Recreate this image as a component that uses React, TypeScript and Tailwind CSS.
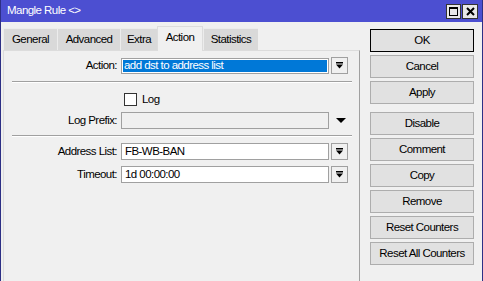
import React from 'react';

function DropArrow() {
  return (
    <svg width="7" height="7" viewBox="0 0 7 7" className="block">
      <rect x="0" y="0" width="7" height="1.5" fill="#000" />
      <path d="M0 2.5H7L3.5 6.5Z" fill="#000" />
    </svg>
  );
}

function DropButton() {
  return (
    <div className="w-[17px] h-[17px] border border-[#a0a0a0] bg-[#f0f0f0] flex items-center justify-center">
      <DropArrow />
    </div>
  );
}

function Row({ label, children }: { label: string; children: React.ReactNode }) {
  return (
    <div className="flex items-center h-[17px]">
      <div className="w-[117px] text-right pr-[4px] leading-none">{label}</div>
      {children}
    </div>
  );
}

function Separator() {
  return <div className="ml-[8px] w-[340px] h-px bg-[#a0a0a0] border-b border-white box-content" />;
}

function Btn({ label, primary }: { label: string; primary?: boolean }) {
  return (
    <div
      className={
        'w-[104px] h-[23px] flex items-center justify-center bg-[#e1e1e1] border ' +
        (primary ? 'border-black' : 'border-[#adadad]')
      }
    >
      {label}
    </div>
  );
}

const tabs = [
  { name: 'General', w: 'w-[54px]' },
  { name: 'Advanced', w: 'w-[63px]' },
  { name: 'Extra', w: 'w-[37px]' },
  { name: 'Action', w: 'w-[46px]', active: true },
  { name: 'Statistics', w: 'w-[55px]' },
];

export default function App() {
  return (
    <div className="w-[483px] h-[281px] overflow-hidden bg-[#f0f0f0] border-x border-[#2d2f85] font-['Liberation_Sans',Arial,sans-serif] text-[11.5px] tracking-[-0.55px] text-black">
      {/* title bar */}
      <div className="h-[22px] bg-[#4c4fd1] flex items-center justify-between pl-[6px] pr-[4px]">
        <span className="text-white">Mangle Rule &lt;&gt;</span>
        <div className="flex gap-[1px]">
          <div className="w-[15px] h-[15px] bg-[#e8e8e8] border border-[#333] flex items-center justify-center">
            <div className="w-[9px] h-[9px] border border-black border-t-2" />
          </div>
          <div className="w-[16px] h-[15px] bg-[#e8e8e8] border border-[#333] flex items-center justify-center">
            <svg width="9" height="9" viewBox="0 0 9 9">
              <path d="M1 1L8 8M8 1L1 8" stroke="#000" strokeWidth="2" />
            </svg>
          </div>
        </div>
      </div>

      <div className="flex">
        {/* left: tabs + panel */}
        <div className="pl-[2px] flex flex-col">
          <div className="flex items-end h-[28px]">
            {tabs.map((t) =>
              t.active ? (
                <div
                  key={t.name}
                  className={t.w + ' h-[25px] bg-[#f0f0f0] border-x border-t border-[#dcdcdc] flex items-center justify-center pb-[3px] -mb-px z-10'}
                >
                  {t.name}
                </div>
              ) : (
                <div
                  key={t.name}
                  className={t.w + ' h-[22px] bg-[#d9d9d9] border-l border-t border-[#ececec] flex items-center justify-center pt-[1px]'}
                >
                  {t.name}
                </div>
              )
            )}
          </div>
          <div className="w-[357px] h-[240px] border-t border-l border-[#dcdcdc] border-r border-r-[#a0a0a0] flex flex-col pt-[6px]">
            <Row label="Action:">
              <div className="w-[208px] h-[16px] border border-[#a0a0a0] bg-white p-[1px]">
                <div className="h-full bg-[#0078d7] text-white flex items-center pl-[1px] leading-none">add dst to address list</div>
              </div>
              <div className="ml-[2px]">
                <DropButton />
              </div>
            </Row>
            <div className="mt-[7px]">
              <Separator />
            </div>
            <div className="mt-[10px] flex items-center h-[13px]">
              <div className="ml-[120px] w-[13px] h-[13px] border border-[#333] bg-white" />
              <span className="ml-[5px] leading-none">Log</span>
            </div>
            <div className="mt-[6px]">
              <Row label="Log Prefix:">
                <div className="w-[208px] h-[17px] border border-[#a0a0a0] bg-[#f0f0f0]" />
                <div className="ml-[7px]">
                  <svg width="10" height="5" viewBox="0 0 10 5" className="block">
                    <path d="M0 0H10L5 5Z" fill="#000" />
                  </svg>
                </div>
              </Row>
            </div>
            <div className="mt-[6px]">
              <Separator />
            </div>
            <div className="mt-[6px]">
              <Row label="Address List:">
                <div className="w-[208px] h-[17px] border border-[#a0a0a0] bg-white flex items-center pl-[3px] leading-none">FB-WB-BAN</div>
                <div className="ml-[2px]">
                  <DropButton />
                </div>
              </Row>
            </div>
            <div className="mt-[6px]">
              <Row label="Timeout:">
                <div className="w-[208px] h-[17px] border border-[#a0a0a0] bg-white flex items-center pl-[3px] leading-none">1d 00:00:00</div>
                <div className="ml-[2px]">
                  <DropButton />
                </div>
              </Row>
            </div>
          </div>
        </div>

        {/* right: buttons */}
        <div className="ml-[10px] pt-[7px] flex flex-col gap-[3px]">
          <Btn label="OK" primary />
          <Btn label="Cancel" />
          <Btn label="Apply" />
          <div className="mt-[5px] flex flex-col gap-[3px]">
            <Btn label="Disable" />
            <Btn label="Comment" />
            <Btn label="Copy" />
            <Btn label="Remove" />
            <Btn label="Reset Counters" />
            <Btn label="Reset All Counters" />
          </div>
        </div>
      </div>
    </div>
  );
}
